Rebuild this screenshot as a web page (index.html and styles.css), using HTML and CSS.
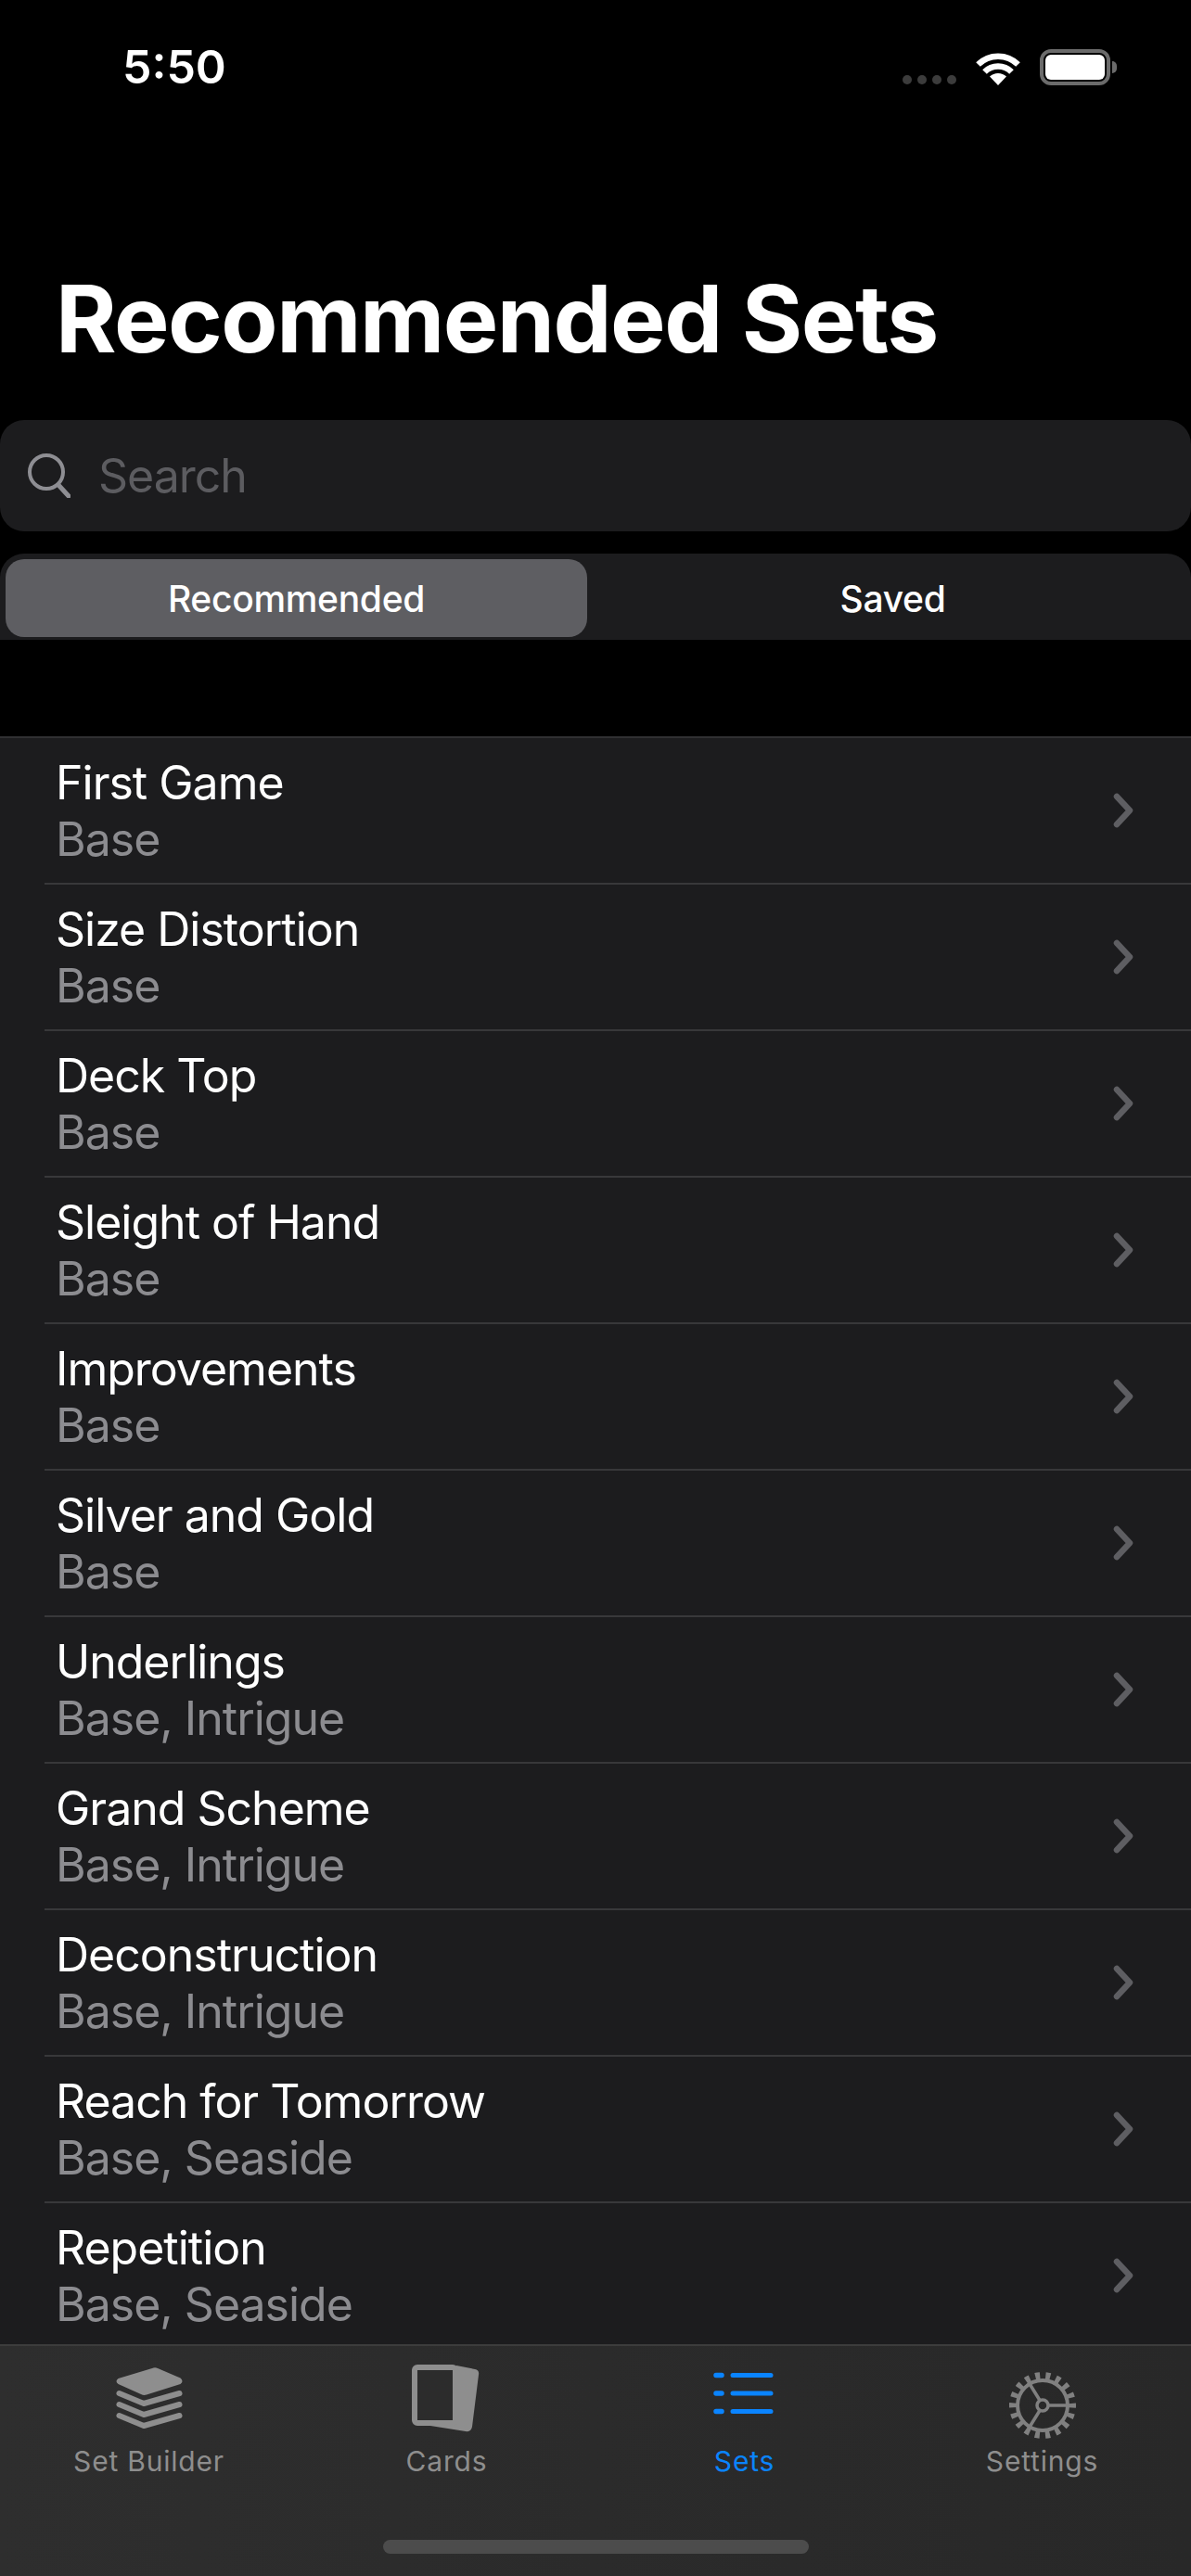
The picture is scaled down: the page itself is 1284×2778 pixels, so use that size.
FILE: index.html
```html
<!DOCTYPE html>
<html lang="en">
<head>
    <meta charset="UTF-8">
    <meta name="viewport" content="width=device-width, initial-scale=1.0">
    <title>Recommended Sets</title>
    <link rel="stylesheet" href="styles.css">
</head>
<body>
    <div class="app">
        <div class="status-bar">
            <span class="status-time">5:50</span>
            <div class="status-icons">
                <div class="signal-dots"><i></i><i></i><i></i><i></i></div>
                <svg class="wifi" width="50" height="38" viewBox="0 0 50 38">
                    <path d="M25 38 16 28.500a13 13 0 0 1 18 0Z" fill="#fff"/>
                    <path d="M10.500 23.500a20.500 20.500 0 0 1 29 0" fill="none" stroke="#fff" stroke-width="6.500"/>
                    <path d="M3.500 15.500a30.500 30.500 0 0 1 43 0" fill="none" stroke="#fff" stroke-width="6.500"/>
                </svg>
                <div class="battery"><div class="battery-level"></div></div>
            </div>
        </div>

        <h1 class="page-title">Recommended Sets</h1>

        <div class="search-bar">
            <svg width="48" height="48" viewBox="0 0 48 48">
                <circle cx="22" cy="20" r="18" fill="none" stroke="#8e8e93" stroke-width="4"/>
                <path d="M35 34 46 46" fill="none" stroke="#8e8e93" stroke-width="5" stroke-linecap="round"/>
            </svg>
            <span class="search-placeholder">Search</span>
        </div>

        <div class="segments">
            <div class="segment segment-active">Recommended</div>
            <div class="segment segment-right">Saved</div>
        </div>

        <div class="set-list">
            <div class="set-row"><div class="set-text"><div class="set-name">First Game</div><div class="set-sub">Base</div></div><svg class="chevron" width="22" height="38" viewBox="0 0 22 38"><path d="M4 4 18 19 4 34"/></svg></div>
            <div class="set-row"><div class="set-text"><div class="set-name">Size Distortion</div><div class="set-sub">Base</div></div><svg class="chevron" width="22" height="38" viewBox="0 0 22 38"><path d="M4 4 18 19 4 34"/></svg></div>
            <div class="set-row"><div class="set-text"><div class="set-name">Deck Top</div><div class="set-sub">Base</div></div><svg class="chevron" width="22" height="38" viewBox="0 0 22 38"><path d="M4 4 18 19 4 34"/></svg></div>
            <div class="set-row"><div class="set-text"><div class="set-name">Sleight of Hand</div><div class="set-sub">Base</div></div><svg class="chevron" width="22" height="38" viewBox="0 0 22 38"><path d="M4 4 18 19 4 34"/></svg></div>
            <div class="set-row"><div class="set-text"><div class="set-name">Improvements</div><div class="set-sub">Base</div></div><svg class="chevron" width="22" height="38" viewBox="0 0 22 38"><path d="M4 4 18 19 4 34"/></svg></div>
            <div class="set-row"><div class="set-text"><div class="set-name">Silver and Gold</div><div class="set-sub">Base</div></div><svg class="chevron" width="22" height="38" viewBox="0 0 22 38"><path d="M4 4 18 19 4 34"/></svg></div>
            <div class="set-row"><div class="set-text"><div class="set-name">Underlings</div><div class="set-sub">Base, Intrigue</div></div><svg class="chevron" width="22" height="38" viewBox="0 0 22 38"><path d="M4 4 18 19 4 34"/></svg></div>
            <div class="set-row"><div class="set-text"><div class="set-name">Grand Scheme</div><div class="set-sub">Base, Intrigue</div></div><svg class="chevron" width="22" height="38" viewBox="0 0 22 38"><path d="M4 4 18 19 4 34"/></svg></div>
            <div class="set-row"><div class="set-text"><div class="set-name">Deconstruction</div><div class="set-sub">Base, Intrigue</div></div><svg class="chevron" width="22" height="38" viewBox="0 0 22 38"><path d="M4 4 18 19 4 34"/></svg></div>
            <div class="set-row"><div class="set-text"><div class="set-name">Reach for Tomorrow</div><div class="set-sub">Base, Seaside</div></div><svg class="chevron" width="22" height="38" viewBox="0 0 22 38"><path d="M4 4 18 19 4 34"/></svg></div>
            <div class="set-row"><div class="set-text"><div class="set-name">Repetition</div><div class="set-sub">Base, Seaside</div></div><svg class="chevron" width="22" height="38" viewBox="0 0 22 38"><path d="M4 4 18 19 4 34"/></svg></div>
        </div>

        <div class="tab-bar">
            <div class="tabs">
                <div class="tab">
                    <svg class="tab-icon" width="72" height="72" viewBox="0 0 72 72">
                        <path d="M39 2Q42 .5 45 2L69.500 12.500Q73.500 16 69.500 19L33 30.500Q30 31.500 27 30L2.500 19Q-1.500 16 2.500 13Z" fill="#8e8e8e"/>
                        <path d="M3.500 29 30 40 68.500 29M3.500 41 30 52 68.500 41M3.500 53 30 64 68.500 53" fill="none" stroke="#8e8e8e" stroke-width="6" stroke-linecap="round" stroke-linejoin="round"/>
                    </svg>
                    <span class="tab-label">Set Builder</span>
                </div>
                <div class="tab">
                    <svg class="tab-icon tab-icon-cards" width="72" height="72" viewBox="0 0 72 72">
                        <path d="M48 -1 68 3Q73 4 72 9L65 65Q64 71 58 70L20 64Z" fill="#8e8e8e"/>
                        <rect x="3" y="1" width="44" height="60" rx="3" fill="#2c2c2c" stroke="#8e8e8e" stroke-width="6"/>
                    </svg>
                    <span class="tab-label">Cards</span>
                </div>
                <div class="tab tab-active">
                    <svg class="tab-icon" width="72" height="72" viewBox="0 0 72 72">
                        <path d="M5 9.500h6M5 29h6M5 48.500h6" stroke="#0a84ff" stroke-width="5.500" stroke-linecap="round"/>
                        <path d="M23 9.500h41M23 29h41M23 48.500h41" stroke="#0a84ff" stroke-width="5" stroke-linecap="round"/>
                    </svg>
                    <span class="tab-label">Sets</span>
                </div>
                <div class="tab">
                    <svg class="tab-icon" width="72" height="72" viewBox="0 0 72 72">
                        <circle cx="36" cy="42" r="27" fill="none" stroke="#808080" stroke-width="4"/>
                        <circle cx="36" cy="42" r="32" fill="none" stroke="#808080" stroke-width="8" stroke-dasharray="5 6.170" stroke-dashoffset="2.500"/>
                        <circle cx="36" cy="42" r="6" fill="none" stroke="#808080" stroke-width="3.500"/>
                        <path d="M42 42H62M33 36.500 21.500 18M33 47.500 21.500 66" fill="none" stroke="#808080" stroke-width="3.500"/>
                    </svg>
                    <span class="tab-label">Settings</span>
                </div>
            </div>
            <div class="home-indicator"></div>
        </div>
    </div>
</body>
</html>
```

FILE: styles.css
```css
html, body {
    margin: 0;
    padding: 0;
    background: #000000;
}

.app {
    width: 1284px;
    height: 2778px;
    display: flex;
    flex-direction: column;
    overflow: hidden;
    font-family: Inter, "Noto Sans", sans-serif;
    color: #ffffff;
}

.status-bar {
    height: 144px;
    flex-shrink: 0;
    display: flex;
    justify-content: space-between;
    align-items: flex-start;
    padding: 44px 87px 0 132px;
    box-sizing: border-box;
}

.status-time {
    font-size: 50px;
    line-height: 56px;
    font-weight: 600;
}

.status-icons {
    display: flex;
    align-items: flex-end;
    gap: 20px;
    margin-top: 9px;
}

.signal-dots {
    display: flex;
    gap: 6px;
    margin-bottom: 1px;
}

.signal-dots i {
    width: 10px;
    height: 10px;
    border-radius: 50%;
    background: #3c3c3c;
}

.battery {
    position: relative;
    width: 76px;
    height: 39px;
    box-sizing: border-box;
    border: 4px solid #6b6b6b;
    border-radius: 12px;
    padding: 2px;
}

.battery::after {
    content: "";
    position: absolute;
    right: -11px;
    top: 9px;
    width: 5px;
    height: 13px;
    background: #6b6b6b;
    border-radius: 0 6px 6px 0;
}

.battery-level {
    height: 100%;
    background: #ffffff;
    border-radius: 6px;
}

.page-title {
    margin: 0;
    height: 309px;
    flex-shrink: 0;
    box-sizing: border-box;
    padding: 150px 0 0 60px;
    font-size: 100px;
    line-height: 100px;
    font-weight: 700;
    letter-spacing: -1.500px;
}

.search-bar {
    height: 120px;
    flex-shrink: 0;
    background: #1c1c1e;
    border-radius: 26px;
    display: flex;
    align-items: center;
    gap: 30px;
    padding-left: 28px;
}

.search-placeholder {
    font-size: 50px;
    letter-spacing: -1px;
    color: #5c5c60;
}

.segments {
    height: 93px;
    flex-shrink: 0;
    margin-top: 24px;
    background: #1c1c1e;
    border-radius: 26px 26px 0 0;
    display: grid;
    grid-template-columns: 627px 1fr;
    padding: 6px 0 3px 6px;
    box-sizing: border-box;
}

.segment {
    display: flex;
    align-items: center;
    justify-content: center;
    font-size: 39px;
    font-weight: 500;
    letter-spacing: -.3px;
}

.segment-right {
    padding-left: 8px;
}

.segment-active {
    background: #5e5e62;
    border-radius: 20px;
}

.set-list {
    margin-top: 104px;
    flex: 1;
    min-height: 0;
    overflow: hidden;
    background: #1c1c1e;
    border-top: 2px solid #303032;
}

.set-row {
    height: 158px;
    box-sizing: border-box;
    margin-left: 48px;
    padding: 0 62px 0 12px;
    border-bottom: 2px solid #38383a;
    display: flex;
    align-items: center;
    justify-content: space-between;
}

.set-name {
    font-size: 50px;
    line-height: 60px;
    letter-spacing: -1px;
}

.set-sub {
    font-size: 50px;
    line-height: 60px;
    letter-spacing: -1px;
    color: #8c8c90;
    margin-top: 1px;
}

.chevron {
    flex-shrink: 0;
}

.chevron path {
    fill: none;
    stroke: #5e5e62;
    stroke-width: 6.500;
    stroke-linecap: round;
    stroke-linejoin: round;
}

.tab-bar {
    height: 250px;
    flex-shrink: 0;
    background: linear-gradient(90deg, #2e2e2e, #282828);
    border-top: 2px solid #3c3c3c;
    box-sizing: border-box;
    position: relative;
}

.tabs {
    display: grid;
    grid-template-columns: repeat(4, 1fr);
}

.tab {
    display: flex;
    flex-direction: column;
    align-items: center;
    padding-top: 22px;
}

.tab-icon {
    overflow: visible;
}

.tab-icon-cards {
    margin-left: -3px;
}

.tab-label {
    font-size: 30px;
    line-height: 36px;
    margin-top: 12px;
    color: #8e8e8e;
    letter-spacing: .8px;
}

.tab-active .tab-label {
    color: #0a84ff;
}

.home-indicator {
    position: absolute;
    left: 413px;
    top: 209px;
    width: 459px;
    height: 15px;
    background: #4c4c4c;
    border-radius: 8px;
}
```
